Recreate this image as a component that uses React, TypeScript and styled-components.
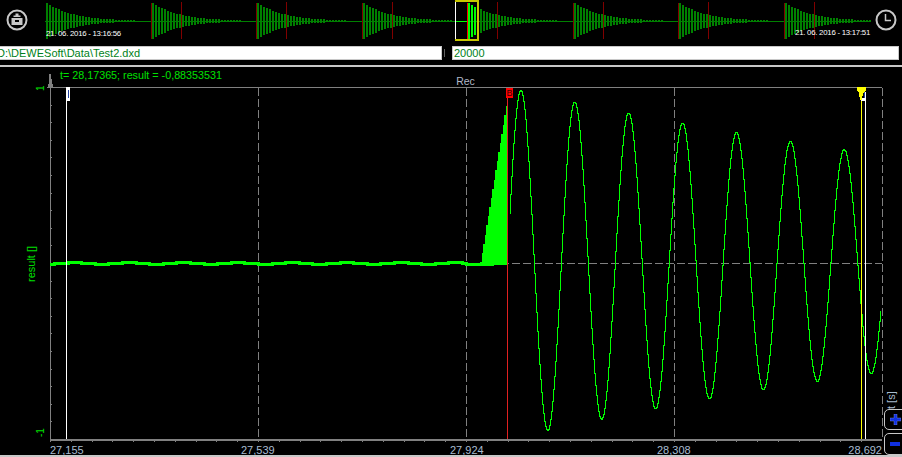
import React from 'react';
import styled, { createGlobalStyle } from 'styled-components';

const GlobalStyle = createGlobalStyle`
  html, body {
    margin: 0;
    padding: 0;
    background: #000;
    overflow: hidden;
  }
`;

const FONT = `'Liberation Sans', Arial, sans-serif`;

// overview strip, x is relative to the strip (strip starts at page x 45)
const BURST_STARTS = [0, 106, 211, 317, 422, 528, 633, 739];

const Burst = ({ start, index }: { start: number; index: number }) => {
  const bars = [];
  for (let i = 0; i * 3 < 88; i++) {
    const x = start + 1 + i * 3;
    const h = Math.max(1, Math.round(18 * Math.exp((-i * 3) / 27)));
    const inFrame = x >= 423 && x < 432;
    bars.push(
      <rect key={i} x={x} y={21 - h} width={2} height={h * 2} fill={inFrame ? '#00ff00' : '#008000'} />
    );
  }
  return (
    <>
      {bars}
      {index > 0 && (
        <>
          <rect x={start} y={3} width={1} height={36} fill={index === 4 ? '#ff0000' : '#800000'} />
          <rect x={start + 30} y={2} width={1} height={37} fill="#800000" />
        </>
      )}
    </>
  );
};

const Overview = () => (
  <OverviewBar>
    <LeftIconSlot>
      <svg width="24" height="24" viewBox="0 0 24 24">
        <circle cx="12" cy="12" r="9.5" fill="none" stroke="#c8c8c8" strokeWidth="2" />
        <rect x="10.5" y="5.5" width="3" height="2.5" fill="#c8c8c8" />
        <rect x="8.5" y="7.5" width="7" height="1.5" fill="#c8c8c8" />
        <rect x="6.5" y="10" width="11" height="7" fill="#c8c8c8" />
        <rect x="10" y="12" width="4" height="2" fill="#000" />
      </svg>
    </LeftIconSlot>
    <StripBox>
      <svg width="826" height="46" viewBox="0 0 826 46" shapeRendering="crispEdges">
        <rect x="0" y="21" width="826" height="1" fill="#008000" />
        {BURST_STARTS.map((s, i) => (
          <Burst key={i} start={s} index={i} />
        ))}
        <rect x="411" y="21" width="11" height="1" fill="#00ff00" />
        <rect x="410" y="0" width="1" height="40" fill="#ffffff" />
        <rect x="410" y="0" width="24" height="2" fill="#c8c800" />
        <rect x="410" y="39" width="24" height="2" fill="#c8c800" />
        <rect x="432" y="0" width="2" height="41" fill="#c8c800" />
      </svg>
      <StartStamp>21. 06. 2016 - 13:16:56</StartStamp>
      <EndStamp>21. 06. 2016 - 13:17:51</EndStamp>
    </StripBox>
    <RightIconSlot>
      <svg width="24" height="24" viewBox="0 0 24 24">
        <circle cx="12" cy="12" r="9.5" fill="none" stroke="#c8c8c8" strokeWidth="2" />
        <path d="M11.5 6v6.5H17" fill="none" stroke="#c8c8c8" strokeWidth="1.5" />
      </svg>
    </RightIconSlot>
  </OverviewBar>
);

// plot helpers, all coordinates in page pixels
const buildWave = () => {
  let d = '';
  for (let x = 509; x <= 880; x++) {
    const t = x - 520;
    const amp = 173 * Math.exp(-t / 773);
    const y = Math.round(263 - amp * Math.cos((2 * Math.PI * t) / 53.9)) + 0.5;
    d += x === 509 ? `M${x + 0.5} ${y}` : `H${x + 0.5}V${y}`;
  }
  return d;
};

const buildFlat = () => {
  let d = 'M50 264.5H54';
  for (let x = 54; x <= 452; x += 13.6) {
    const decay = Math.exp(-(x - 54) / 500);
    const y = Math.round(263 - 1.4 * decay * Math.cos((2 * Math.PI * (x + 7 - 75)) / 54)) + 0.5;
    d += `V${y}H${Math.round(x + 13.6)}`;
  }
  return d + 'V263.5H466V264.5H494';
};

const buildRamp = () => {
  let d = 'M480 265';
  for (let x = 480; x <= 507; x += 1.5) {
    d += `H${x}V${Math.round(262 - ((x - 480) / 27) * 165)}`;
  }
  return d + 'H508V265Z';
};

const GRID_X = [258.5, 466.5, 674.5, 882.5];
const TICK_X = Array.from({ length: 40 }, (_, i) => 50 + Math.round(i * 20.8));
const TICK_Y = Array.from({ length: 20 }, (_, i) => 439 - Math.round(i * 17.6));
const X_LABELS = [
  { x: 50, label: '27,155', anchor: 'start' },
  { x: 241, label: '27,539', anchor: 'start' },
  { x: 450, label: '27,924', anchor: 'start' },
  { x: 657, label: '28,308', anchor: 'start' },
  { x: 882, label: '28,692', anchor: 'end' },
];

const Chart = () => (
  <ChartSvg viewBox="0 67 902 388" width="902" height="388">
    {GRID_X.map((x) => (
      <DashLine key={x} x1={x} x2={x} y1={88} y2={438} />
    ))}
    <DashLine x1={50} x2={882} y1={263.5} y2={263.5} />

    <g shapeRendering="crispEdges">
      <rect x="47" y="87" width="835" height="1" fill="#808080" />
      <rect x="50" y="74" width="1" height="365" fill="#808080" />
      <rect x="50" y="438.5" width="832" height="2" fill="#808080" />
      <polygon points="49,74 51,74 52,84 53,84 53,87 48,87 48,84 49,84" fill="#808080" />
      {TICK_X.map((x) => (
        <rect key={x} x={x} y={440} width={1} height={2} fill="#808080" />
      ))}
      {TICK_Y.map((y) => (
        <rect key={y} x={50} y={y} width={2} height={1} fill="#808080" />
      ))}
    </g>

    <path d={buildFlat()} fill="none" stroke="#00ff00" strokeWidth="3" shapeRendering="crispEdges" />
    <path d={buildRamp()} fill="#00ff00" shapeRendering="crispEdges" />
    <path d={buildWave()} fill="none" stroke="#00ff00" strokeWidth="1" shapeRendering="crispEdges" />

    <g shapeRendering="crispEdges">
      <rect x="507" y="97" width="1" height="342" fill="#e02020" />
      <rect x="506" y="88" width="7" height="10" fill="#ff0000" />

      <rect x="66" y="87" width="1" height="352" fill="#ffffff" />
      <rect x="66" y="87" width="4" height="14" fill="#ffffff" />
      <rect x="68" y="90" width="1" height="8" fill="#2040a0" />

      <rect x="861" y="98" width="1" height="341" fill="#ffff00" />
      <rect x="865" y="92" width="1" height="347" fill="#ffffff" />
      <rect x="861" y="98" width="5" height="3" fill="#ffffff" />
      <rect x="864" y="91" width="1" height="7" fill="#2040a0" />
      <polygon points="857,87 866,87 866,91 863,93 862,100 860,100 859,93 857,91" fill="#ffff00" />
    </g>

    <FlagLabel x={509.5} y={96}>B</FlagLabel>
    <RecLabel x={465.5} y={85}>Rec</RecLabel>

    <GreenLabel transform="translate(44 91) rotate(-90)">1</GreenLabel>
    <GreenLabel transform="translate(44 437) rotate(-90)">-1</GreenLabel>
    <ResultLabel transform="translate(35 282) rotate(-90)">result []</ResultLabel>
    <AxisLabel transform="translate(895 409) rotate(-90)">t [s]</AxisLabel>

    {X_LABELS.map((l) => (
      <AxisLabel key={l.x} x={l.x} y={454} textAnchor={l.anchor}>
        {l.label}
      </AxisLabel>
    ))}
  </ChartSvg>
);

export default function App() {
  return (
    <Page>
      <GlobalStyle />
      <Overview />
      <FieldRow>
        <PathField>D:\DEWESoft\Data\Test2.dxd</PathField>
        <FieldTick />
        <RateField>20000</RateField>
      </FieldRow>
      <PlotPanel>
        <Readout>t= 28,17365; result = -0,88353531</Readout>
        <Chart />
        <ZoomButtons>
          <PlusButton>
            <svg width="11" height="11" viewBox="0 0 11 11">
              <path d="M4 0h3v4h4v3H7v4H4V7H0V4h4z" fill="#1030e0" stroke="#90a0f0" strokeWidth="0.4" />
            </svg>
          </PlusButton>
          <MinusButton>
            <svg width="10" height="4" viewBox="0 0 10 4">
              <rect x="0" y="0" width="10" height="4" fill="#1030e0" />
            </svg>
          </MinusButton>
        </ZoomButtons>
      </PlotPanel>
    </Page>
  );
}

const Page = styled.div`
  width: 902px;
  height: 457px;
  background: #000;
  overflow: hidden;
  font-family: ${FONT};
`;

const OverviewBar = styled.div`
  display: flex;
  align-items: flex-start;
  height: 46px;
`;

const IconSlot = styled.div`
  flex: 0 0 24px;
  height: 24px;
  margin-top: 8px;

  & svg {
    display: block;
  }
`;

const LeftIconSlot = styled(IconSlot)`
  margin-left: 5px;
  margin-right: 16px;
`;

const RightIconSlot = styled(IconSlot)`
  margin-left: 3px;
`;

const StripBox = styled.div`
  position: relative;
  flex: 0 0 826px;
  height: 46px;

  & svg {
    display: block;
  }
`;

const Stamp = styled.span`
  position: absolute;
  font-size: 7.8px;
  letter-spacing: -0.25px;
  line-height: 10px;
  color: #ffffff;
  white-space: nowrap;
`;

const StartStamp = styled(Stamp)`
  top: 29px;
  left: 1px;
`;

const EndStamp = styled(Stamp)`
  top: 28px;
  right: 1px;
`;

const FieldRow = styled.div`
  display: flex;
  align-items: center;
  height: 14px;
  padding-right: 3px;
`;

const Field = styled.div`
  box-sizing: border-box;
  height: 14px;
  background: #ffffff;
  border: 1px solid #c8c8c8;
  color: #007f20;
  font-size: 11px;
  line-height: 12px;
  white-space: nowrap;
  overflow: hidden;
`;

const PathField = styled(Field)`
  flex: 0 0 442px;
  border-left: none;
  text-indent: -3px;
`;

const RateField = styled(Field)`
  flex: 1;
  padding-left: 1px;
`;

const FieldTick = styled.div`
  flex: 0 0 1px;
  height: 8px;
  margin: 0 7px 0 2px;
  background: #606060;
`;

const PlotPanel = styled.div`
  position: relative;
  margin-top: 5px;
  height: 392px;
  box-sizing: border-box;
  border-top: 2px solid #c8c8c8;
  border-bottom: 2px solid #c8c8c8;
`;

const Readout = styled.div`
  position: absolute;
  left: 60px;
  top: 1px;
  font-size: 10.75px;
  line-height: 14px;
  color: #00e000;
  white-space: nowrap;
`;

const ChartSvg = styled.svg`
  display: block;
  font-family: ${FONT};
`;

const DashLine = styled.line`
  stroke: #808080;
  stroke-width: 1;
  stroke-dasharray: 8 3;
  shape-rendering: crispEdges;
`;

const AxisLabel = styled.text`
  font-size: 11px;
  fill: #a8bcd0;
`;

const GreenLabel = styled.text`
  font-size: 10px;
  fill: #00e000;
`;

const ResultLabel = styled(GreenLabel)`
  font-size: 11px;
`;

const RecLabel = styled.text`
  font-size: 10.5px;
  fill: #b0b8c8;
  text-anchor: middle;
`;

const FlagLabel = styled.text`
  font-size: 9px;
  fill: #300000;
  text-anchor: middle;
`;

const ZoomButtons = styled.div`
  position: absolute;
  right: -6px;
  bottom: 0;
  display: flex;
  flex-direction: column;
  gap: 3px;
`;

const ZoomButton = styled.div`
  box-sizing: border-box;
  width: 24px;
  display: flex;
  align-items: center;
  padding-left: 5px;
  background: #000;
  border: 1px solid #c8c8c8;
  border-radius: 5px;

  & svg {
    display: block;
  }
`;

const PlusButton = styled(ZoomButton)`
  height: 21px;
`;

const MinusButton = styled(ZoomButton)`
  height: 22px;
`;
